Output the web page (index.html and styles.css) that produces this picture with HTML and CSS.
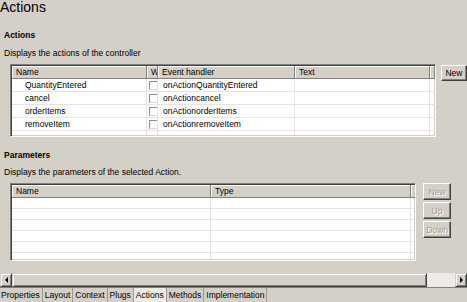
FILE: index.html
```html
<!DOCTYPE html>
<html lang="en">
<head>
    <meta charset="UTF-8">
    <title>Actions</title>
    <link rel="stylesheet" href="styles.css">
</head>
<body>
    <div class="editor">
        <h1 class="page-title">Actions</h1>

        <!-- Actions of the controller -->
        <div class="section">
            <div class="section-title">Actions</div>
            <div class="section-desc">Displays the actions of the controller</div>
            <div class="section-body">
                <div class="grid actions-grid">
                    <div class="grid-head">
                        <div class="hcell">Name</div>
                        <div class="hcell">W</div>
                        <div class="hcell">Event handler</div>
                        <div class="hcell">Text</div>
                        <div class="hcell"></div>
                    </div>
                    <div class="grid-row">
                        <div class="cell name">QuantityEntered</div>
                        <div class="cell check"><span class="checkbox"></span></div>
                        <div class="cell">onActionQuantityEntered</div>
                        <div class="cell"></div>
                        <div class="cell"></div>
                    </div>
                    <div class="grid-row">
                        <div class="cell name">cancel</div>
                        <div class="cell check"><span class="checkbox"></span></div>
                        <div class="cell">onActioncancel</div>
                        <div class="cell"></div>
                        <div class="cell"></div>
                    </div>
                    <div class="grid-row">
                        <div class="cell name">orderItems</div>
                        <div class="cell check"><span class="checkbox"></span></div>
                        <div class="cell">onActionorderItems</div>
                        <div class="cell"></div>
                        <div class="cell"></div>
                    </div>
                    <div class="grid-row">
                        <div class="cell name">removeItem</div>
                        <div class="cell check"><span class="checkbox"></span></div>
                        <div class="cell">onActionremoveItem</div>
                        <div class="cell"></div>
                        <div class="cell"></div>
                    </div>
                    <div class="grid-row filler">
                        <div class="cell"></div>
                        <div class="cell"></div>
                        <div class="cell"></div>
                        <div class="cell"></div>
                        <div class="cell"></div>
                    </div>
                </div>
                <div class="buttons">
                    <button class="btn">New</button>
                </div>
            </div>
        </div>

        <!-- Parameters of the selected action -->
        <div class="section params">
            <div class="section-title">Parameters</div>
            <div class="section-desc">Displays the parameters of the selected Action.</div>
            <div class="section-body">
                <div class="grid params-grid">
                    <div class="grid-head">
                        <div class="hcell">Name</div>
                        <div class="hcell">Type</div>
                        <div class="hcell"></div>
                    </div>
                    <div class="grid-row"><div class="cell"></div><div class="cell"></div><div class="cell"></div></div>
                    <div class="grid-row"><div class="cell"></div><div class="cell"></div><div class="cell"></div></div>
                    <div class="grid-row"><div class="cell"></div><div class="cell"></div><div class="cell"></div></div>
                    <div class="grid-row"><div class="cell"></div><div class="cell"></div><div class="cell"></div></div>
                    <div class="grid-row"><div class="cell"></div><div class="cell"></div><div class="cell"></div></div>
                    <div class="grid-row filler"><div class="cell"></div><div class="cell"></div><div class="cell"></div></div>
                </div>
                <div class="buttons">
                    <button class="btn" disabled>New</button>
                    <button class="btn" disabled>Up</button>
                    <button class="btn" disabled>Down</button>
                </div>
            </div>
        </div>

        <!-- 水平滚动条 -->
        <div class="hscroll">
            <div class="arrow-btn"><span class="arrow left"></span></div>
            <div class="thumb"></div>
            <div class="track"></div>
            <div class="arrow-btn"><span class="arrow right"></span></div>
        </div>

        <!-- 底部页签 -->
        <div class="tabs">
            <div class="tab first">Properties</div>
            <div class="tab">Layout</div>
            <div class="tab">Context</div>
            <div class="tab">Plugs</div>
            <div class="tab active">Actions</div>
            <div class="tab">Methods</div>
            <div class="tab">Implementation</div>
        </div>
    </div>
</body>
</html>
```

FILE: styles.css
```css
body, html {
    margin: 0;
    padding: 0;
    background: #d4d0c8;
    color: #000;
    font-family: "Liberation Sans", Arial, sans-serif;
    font-size: 8.5px;
    line-height: 10px;
}

.editor {
    width: 467px;
    height: 302px;
    overflow: hidden;
}

.page-title {
    margin: 0;
    font-size: 14px;
    line-height: 14px;
    font-weight: normal;
}

.section {
    padding-left: 4px;
}

.section-title {
    margin-top: 16px;
    font-weight: bold;
}

.params .section-title {
    margin-top: 13px;
}

.section-desc {
    margin-top: 8px;
}

.params .section-desc {
    margin-top: 7px;
}

.section-body {
    display: flex;
    margin-top: 6px;
    margin-left: 6px;
}

/* 表格 */
.grid {
    display: flex;
    flex-direction: column;
    box-sizing: border-box;
    background: white;
    border: 1px solid;
    border-color: #808080 #fff #fff #808080;
    box-shadow: inset 1px 1px 0 #404040, inset -1px -1px 0 #d4d0c8;
    padding: 1px;
    overflow: hidden;
}

.actions-grid {
    width: 426px;
    height: 73px;
}

.params-grid {
    width: 406px;
    height: 78px;
}

.grid-head, .grid-row {
    display: grid;
}

.actions-grid .grid-head, .actions-grid .grid-row {
    grid-template-columns: 135px 11px 137px 135px 1fr;
}

.params-grid .grid-head, .params-grid .grid-row {
    grid-template-columns: 199px 200px 1fr;
}

.hcell {
    box-sizing: border-box;
    height: 13px;
    line-height: 12px;
    padding-left: 4px;
    background: #d4d0c8;
    border-right: 1px solid #808080;
    border-bottom: 1px solid #808080;
    box-shadow: inset 1px 1px 0 #fff;
    white-space: nowrap;
    overflow: hidden;
}

.grid-row {
    height: 13px;
}

.params-grid .grid-row {
    height: 11px;
}

.grid-row.filler {
    flex: 1;
}

.cell {
    box-sizing: border-box;
    line-height: 13px;
    padding-left: 5px;
    border-right: 1px solid #e4e4e4;
    border-bottom: 1px solid #e4e4e4;
    white-space: nowrap;
    overflow: hidden;
}

.filler .cell {
    border-bottom: none;
}

.cell.name {
    padding-left: 13px;
}

.cell.check {
    padding: 2px 0 0 2px;
}

.checkbox {
    display: block;
    box-sizing: border-box;
    width: 9px;
    height: 9px;
    border: 1px solid;
    border-color: #8e8e8e #d8d8d8 #d8d8d8 #8e8e8e;
    background: #fff;
}

/* 按钮 */
.buttons {
    display: flex;
    flex-direction: column;
    gap: 2px;
}

.actions-grid + .buttons {
    margin-left: 5px;
    margin-top: 1px;
}

.params-grid + .buttons {
    margin-left: 7px;
}

.btn {
    box-sizing: border-box;
    width: 26px;
    height: 16px;
    padding: 0;
    font-family: inherit;
    font-size: 8.5px;
    color: #000;
    background: #d4d0c8;
    border: 1px solid;
    border-color: #fff #404040 #404040 #fff;
    box-shadow: inset -1px -1px 0 #808080;
}

.params-grid + .buttons .btn {
    width: 28px;
    height: 17px;
}

.btn:disabled {
    color: #a09e9a;
    text-shadow: 1px 1px 0 #fff;
}

/* 滚动条 */
.hscroll {
    display: flex;
    height: 14px;
    margin-top: 12px;
}

.arrow-btn, .thumb {
    box-sizing: border-box;
    background: #d4d0c8;
    border: 1px solid;
    border-color: #d4d0c8 #404040 #404040 #d4d0c8;
    box-shadow: inset 1px 1px 0 #fff, inset -1px -1px 0 #808080;
}

.arrow-btn {
    width: 12px;
    display: flex;
    align-items: center;
    justify-content: center;
}

.thumb {
    width: 415px;
}

.track {
    flex: 1;
    background: #ecebe8;
}

.arrow {
    width: 0;
    height: 0;
    border-top: 3px solid transparent;
    border-bottom: 3px solid transparent;
}

.arrow.left {
    border-right: 3px solid #000;
}

.arrow.right {
    border-left: 3px solid #000;
}

/* 页签 */
.tabs {
    display: flex;
    height: 15px;
    box-sizing: border-box;
    border-top: 1px solid #808080;
}

.tab {
    padding: 0 2px;
    line-height: 14px;
    border-right: 1px solid #9c9a94;
    white-space: nowrap;
}

.tab.first {
    padding-left: 1px;
}

.tab.active {
    background: #eceae5;
}
```
